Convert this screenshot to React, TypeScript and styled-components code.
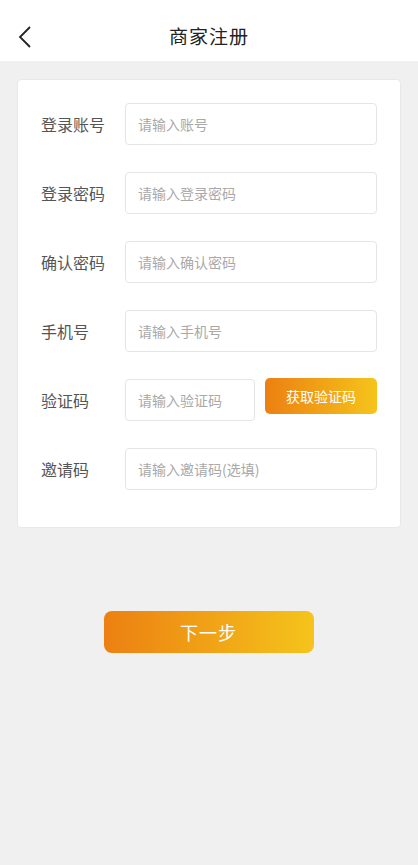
import React from "react";
import styled, { createGlobalStyle } from "styled-components";

const GlobalStyle = createGlobalStyle`
  html, body {
    margin: 0;
    padding: 0;
    background: #f0f0f0;
    font-family: "Noto Sans CJK SC", "Noto Sans", sans-serif;
  }
  * { box-sizing: border-box; }
`;

const Page = styled.div`
  min-height: 865px;
  background: #f0f0f0;
`;

const Header = styled.div`
  height: 61px;
  background: #fff;
  display: flex;
  align-items: center;
  justify-content: center;
  position: relative;
  padding-top: 10px;
`;

const BackButton = styled.button`
  position: absolute;
  left: 14px;
  top: 24px;
  width: 22px;
  height: 26px;
  padding: 0;
  border: none;
  background: none;
  display: flex;
  align-items: center;
  justify-content: center;
`;

const Title = styled.div`
  font-size: 19px;
  color: #222;
  letter-spacing: 1px;
`;

const Card = styled.div`
  margin: 18px 17px 0;
  background: #fff;
  border: 1px solid #e6e8eb;
  border-radius: 4px;
  padding: 23px 22px 37px 22px;
  display: flex;
  flex-direction: column;
  gap: 27px;
`;

const Row = styled.div`
  display: flex;
  align-items: center;
`;

const Label = styled.div`
  width: 85px;
  flex-shrink: 0;
  font-size: 16px;
  color: #555;
  padding-left: 1px;
`;

const Input = styled.input<{ $narrow?: boolean }>`
  height: 42px;
  width: ${(p) => (p.$narrow ? "130px" : "252px")};
  border: 1px solid #e3e5e8;
  border-radius: 4px;
  padding: 0 12px;
  font-size: 14px;
  font-family: inherit;
  color: #333;
  outline: none;
  &::placeholder {
    color: #a9a9a9;
  }
`;

const CodeButton = styled.button`
  align-self: flex-start;
  margin-left: 10px;
  margin-top: -1px;
  width: 112px;
  height: 36px;
  border: none;
  border-radius: 5px;
  background: linear-gradient(90deg, #ec8012, #f5c41b);
  color: #fff;
  font-size: 14px;
  font-family: inherit;
`;

const Footer = styled.div`
  display: flex;
  justify-content: center;
  padding-top: 83px;
`;

const NextButton = styled.button`
  width: 210px;
  height: 42px;
  margin-right: 1px;
  border: none;
  border-radius: 8px;
  background: linear-gradient(90deg, #ec8012, #f5c41b);
  color: #fff;
  font-size: 18px;
  font-family: inherit;
  letter-spacing: 1px;
`;

const fields = [
  { label: "登录账号", placeholder: "请输入账号" },
  { label: "登录密码", placeholder: "请输入登录密码" },
  { label: "确认密码", placeholder: "请输入确认密码" },
  { label: "手机号", placeholder: "请输入手机号" },
];

export default function App() {
  return (
    <Page>
      <GlobalStyle />
      <Header>
        <BackButton>
          <svg width="14" height="22" viewBox="0 0 14 22">
            <path d="M12 1 L2 11 L12 21" fill="none" stroke="#222" strokeWidth="1.8" />
          </svg>
        </BackButton>
        <Title>商家注册</Title>
      </Header>
      <Card>
        {fields.map((f) => (
          <Row key={f.label}>
            <Label>{f.label}</Label>
            <Input placeholder={f.placeholder} />
          </Row>
        ))}
        <Row>
          <Label>验证码</Label>
          <Input $narrow placeholder="请输入验证码" />
          <CodeButton>获取验证码</CodeButton>
        </Row>
        <Row>
          <Label>邀请码</Label>
          <Input placeholder="请输入邀请码(选填)" />
        </Row>
      </Card>
      <Footer>
        <NextButton>下一步</NextButton>
      </Footer>
    </Page>
  );
}
